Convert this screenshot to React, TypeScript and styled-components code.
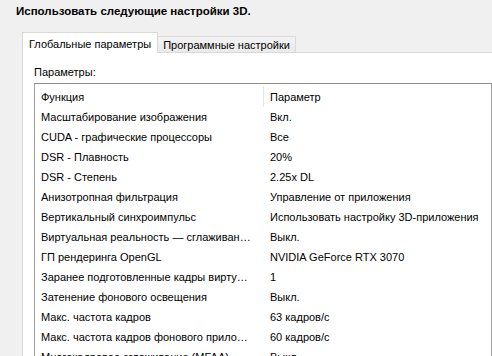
import React from "react";
import styled, { createGlobalStyle } from "styled-components";

const Global = createGlobalStyle`
  html, body { margin: 0; padding: 0; background: #f0f0f0; }
  body { font-family: "Liberation Sans", Arial, sans-serif; font-size: 11px; color: #000; overflow: hidden; }
`;

const Page = styled.div`
  width: 492px;
  height: 356px;
  display: flex;
  flex-direction: column;
  background: #f0f0f0;
  overflow: hidden;
`;

const Title = styled.div`
  flex-shrink: 0;
  padding: 4px 0 0 16px;
  height: 30px;
  box-sizing: border-box;
  font-weight: bold;
  font-size: 11.5px;
  line-height: 15px;
`;

const TabStrip = styled.div`
  flex-shrink: 0;
  display: flex;
  align-items: flex-end;
  padding-left: 22px;
  height: 23px;
  box-sizing: border-box;
  position: relative;
  z-index: 1;
  margin-bottom: -1px;
`;

const Tab = styled.div<{ $active?: boolean }>`
  box-sizing: border-box;
  height: ${(p) => (p.$active ? "21px" : "17px")};
  padding: ${(p) => (p.$active ? "3px 6px 0 6px" : "0 5px")};
  line-height: 16px;
  border: 1px solid #d9d9d9;
  border-bottom: ${(p) => (p.$active ? "none" : "1px solid #d9d9d9")};
  border-left: ${(p) => (p.$active ? "1px solid #d9d9d9" : "none")};
  background: ${(p) => (p.$active ? "#fff" : "linear-gradient(#f2f2f2, #ebebeb)")};
  white-space: nowrap;
`;

const Panel = styled.div`
  flex: 1;
  min-height: 0;
  overflow: hidden;
  margin-left: 22px;
  background: #fff;
  border-top: 1px solid #d9d9d9;
  border-left: 1px solid #d9d9d9;
  padding: 12px 0 0 11px;
  display: flex;
  flex-direction: column;
`;

const Label = styled.div`
  flex-shrink: 0;
  line-height: 15px;
  height: 18px;
`;

const ListBox = styled.div`
  flex: 1;
  min-height: 0;
  border: 1px solid #a0a0a0;
  border-top-color: #8c8c8c;
  border-bottom: none;
  padding-left: 6px;
`;

const HeaderRow = styled.div`
  display: grid;
  grid-template-columns: 222px 1fr;
  height: 23px;
`;

const HeaderCell = styled.div<{ $sep?: boolean }>`
  margin-top: 2px;
  height: 21px;
  line-height: 23px;
  padding-left: ${(p) => (p.$sep ? "6px" : "0")};
  border-left: ${(p) => (p.$sep ? "1px solid #e5e5e5" : "none")};
`;

const Row = styled.div`
  display: grid;
  grid-template-columns: 222px 1fr;
  height: 20px;
  line-height: 20px;
`;

const Cell = styled.div<{ $value?: boolean }>`
  white-space: nowrap;
  overflow: hidden;
  text-overflow: ellipsis;
  padding-left: ${(p) => (p.$value ? "7px" : "0")};
  padding-right: ${(p) => (p.$value ? "0" : "11px")};
`;

const rows: [string, string][] = [
  ["Масштабирование изображения", "Вкл."],
  ["CUDA - графические процессоры", "Все"],
  ["DSR - Плавность", "20%"],
  ["DSR - Степень", "2.25x DL"],
  ["Анизотропная фильтрация", "Управление от приложения"],
  ["Вертикальный синхроимпульс", "Использовать настройку 3D-приложения"],
  ["Виртуальная реальность — сглаживание FXAA", "Выкл."],
  ["ГП рендеринга OpenGL", "NVIDIA GeForce RTX 3070"],
  ["Заранее подготовленные кадры виртуальной реальности", "1"],
  ["Затенение фонового освещения", "Выкл."],
  ["Макс. частота кадров", "63 кадров/с"],
  ["Макс. частота кадров фонового приложения", "60 кадров/с"],
  ["Многокадровое сглаживание (MFAA)", "Выкл."],
];

export default function App() {
  return (
    <>
      <Global />
      <Page>
        <Title>Использовать следующие настройки 3D.</Title>
        <TabStrip>
          <Tab $active>Глобальные параметры</Tab>
          <Tab>Программные настройки</Tab>
        </TabStrip>
        <Panel>
          <Label>Параметры:</Label>
          <ListBox>
            <HeaderRow>
              <HeaderCell>Функция</HeaderCell>
              <HeaderCell $sep>Параметр</HeaderCell>
            </HeaderRow>
            {rows.map(([f, v]) => (
              <Row key={f}>
                <Cell>{f}</Cell>
                <Cell $value>{v}</Cell>
              </Row>
            ))}
          </ListBox>
        </Panel>
      </Page>
    </>
  );
}
